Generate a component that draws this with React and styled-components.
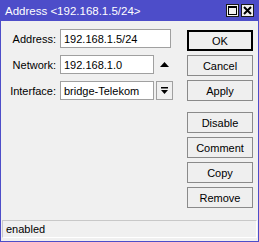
import styled, { createGlobalStyle } from "styled-components";

const Global = createGlobalStyle`
  body {
    margin: 0;
    background: #f0f0f0;
    font-family: "Liberation Sans", Arial, sans-serif;
  }
`;

const Window = styled.div`
  width: 259px;
  height: 242px;
  box-sizing: border-box;
  display: flex;
  flex-direction: column;
  background: #f0f0f0;
  border-left: 1px solid #4d4dc9;
  border-right: 1px solid #4d4dc9;
  border-bottom: 1px solid #4d4dc9;
`;

const TitleBar = styled.div`
  height: 21px;
  margin: 0 -1px;
  background: #4d4dc9;
  color: #fff;
  display: flex;
  align-items: center;
  padding: 0 5px 0 5px;
  font-size: 11.5px;
`;

const Title = styled.div`
  flex: 1;
`;

const TitleButton = styled.div`
  width: 13px;
  height: 13px;
  box-sizing: border-box;
  border: 1px solid #1a1a1a;
  background: #f0f0f0;
  margin-left: 2px;
  display: flex;
  align-items: center;
  justify-content: center;
`;

const Body = styled.div`
  flex: 1;
  display: flex;
  padding: 8px 5px 0 0;
`;

const Form = styled.div`
  display: flex;
  flex-direction: column;
  gap: 7px;
  width: 186px;
`;

const Row = styled.div`
  display: flex;
  align-items: center;
  height: 19px;
`;

const Label = styled.div`
  width: 55px;
  text-align: right;
  padding-right: 4px;
  font-size: 11px;
  color: #000;
`;

const Field = styled.div`
  width: ${(p) => p.$w}px;
  height: 19px;
  box-sizing: border-box;
  border: 1px solid #a0a0a0;
  background: #fff;
  font-size: 11px;
  padding-left: 3px;
  display: flex;
  align-items: center;
  color: #000;
`;

const Side = styled.div`
  width: 17px;
  height: 19px;
  margin-left: 2px;
  box-sizing: border-box;
  display: flex;
  align-items: center;
  justify-content: center;
  border: ${(p) => (p.$boxed ? "1px solid #a0a0a0" : "none")};
`;

const Buttons = styled.div`
  display: flex;
  flex-direction: column;
  gap: 4px;
  margin-top: 1px;
`;

const Button = styled.div`
  width: 66px;
  height: 21px;
  box-sizing: border-box;
  border: ${(p) => (p.$default ? "2px solid #000" : "1px solid #8a8a8a")};
  background: #efefef;
  font-size: 11px;
  color: #000;
  display: flex;
  align-items: center;
  justify-content: center;
  margin-top: ${(p) => (p.$spaced ? "7px" : "0")};
`;

const Status = styled.div`
  height: 18px;
  margin: 0 1px 3px 1px;
  box-sizing: border-box;
  border-top: 1px solid #c8c8c8;
  border-left: 1px solid #c8c8c8;
  border-right: 1px solid #fff;
  border-bottom: 1px solid #fff;
  font-size: 11px;
  padding-left: 3px;
  display: flex;
  align-items: center;
  color: #000;
`;

export default function App() {
  return (
    <>
      <Global />
      <Window>
        <TitleBar>
          <Title>Address &lt;192.168.1.5/24&gt;</Title>
          <TitleButton>
            <svg width="9" height="9" viewBox="0 0 9 9">
              <rect x="0.5" y="0.5" width="8" height="8" fill="none" stroke="#000" />
              <rect x="0.5" y="0.5" width="8" height="1.5" fill="#000" />
            </svg>
          </TitleButton>
          <TitleButton>
            <svg width="9" height="9" viewBox="0 0 9 9">
              <path d="M1 1L8 8M8 1L1 8" stroke="#000" strokeWidth="2" />
            </svg>
          </TitleButton>
        </TitleBar>
        <Body>
          <Form>
            <Row>
              <Label>Address:</Label>
              <Field $w={111}>192.168.1.5/24</Field>
            </Row>
            <Row>
              <Label>Network:</Label>
              <Field $w={94}>192.168.1.0</Field>
              <Side>
                <svg width="9" height="5" viewBox="0 0 9 5">
                  <path d="M0 5L4.5 0L9 5Z" fill="#000" />
                </svg>
              </Side>
            </Row>
            <Row>
              <Label>Interface:</Label>
              <Field $w={94}>bridge-Telekom</Field>
              <Side $boxed>
                <svg width="7" height="8" viewBox="0 0 7 8">
                  <rect x="0" y="0" width="7" height="1.5" fill="#000" />
                  <path d="M0 3H7L3.5 7Z" fill="#000" />
                </svg>
              </Side>
            </Row>
          </Form>
          <Buttons>
            <Button $default>OK</Button>
            <Button>Cancel</Button>
            <Button>Apply</Button>
            <Button $spaced>Disable</Button>
            <Button>Comment</Button>
            <Button>Copy</Button>
            <Button>Remove</Button>
          </Buttons>
        </Body>
        <Status>enabled</Status>
      </Window>
    </>
  );
}
